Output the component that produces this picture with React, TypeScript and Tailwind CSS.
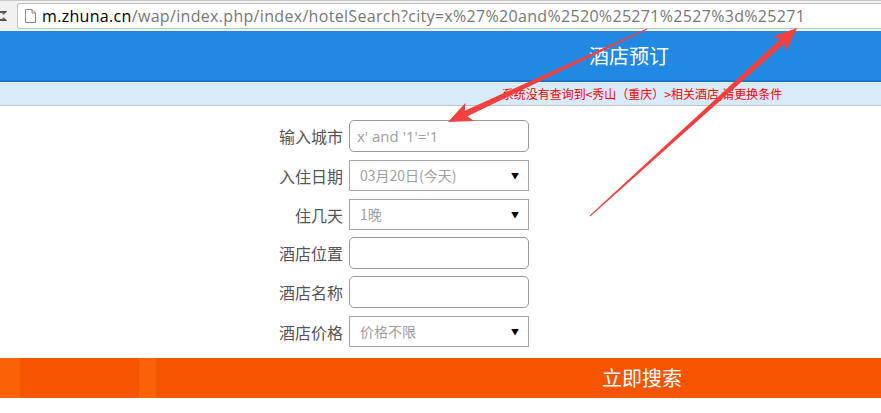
import React from "react"

const rows = [
  { label: "输入城市", kind: "input", value: "x' and '1'='1", mt: "mt-[14px]", h: "h-[32px]" },
  { label: "入住日期", kind: "select", value: "03月20日(今天)", mt: "mt-[8px]", h: "h-[31px]" },
  { label: "住几天", kind: "select", value: "1晚", mt: "mt-[8px]", h: "h-[31px]" },
  { label: "酒店位置", kind: "input", value: "", mt: "mt-[7px]", h: "h-[32px]" },
  { label: "酒店名称", kind: "input", value: "", mt: "mt-[7px]", h: "h-[32px]" },
  { label: "酒店价格", kind: "select", value: "价格不限", mt: "mt-[8px]", h: "h-[31px]" },
]

// tapered annotation arrow, thin at the tail and wide at the head
function arrowPoints(tx: number, ty: number, px: number, py: number) {
  const dx = px - tx
  const dy = py - ty
  const len = Math.hypot(dx, dy)
  const ux = dx / len
  const uy = dy / len
  const nx = -uy
  const ny = ux
  const bx = px - ux * 24
  const by = py - uy * 24
  const cx = px - ux * 20
  const cy = py - uy * 20
  const pts = [
    [tx + nx * 0.5, ty + ny * 0.5],
    [cx + nx * 3, cy + ny * 3],
    [bx + nx * 10, by + ny * 10],
    [px, py],
    [bx - nx * 10, by - ny * 10],
    [cx - nx * 3, cy - ny * 3],
    [tx - nx * 0.5, ty - ny * 0.5],
  ]
  return pts.map((p) => p.map((v) => v.toFixed(1)).join(",")).join(" ")
}

function Caret() {
  return <span className="text-[8px] text-black leading-none mr-[9px]">▼</span>
}

export default function App() {
  return (
    <div
      className="relative w-[881px] h-[413px] overflow-hidden bg-white"
      style={{ fontFamily: '"Noto Sans CJK SC", sans-serif' }}
    >
      {/* browser address bar */}
      <div className="h-[31px] bg-[#f1f1f1] border-t border-[#c9c9c9] flex items-center">
        <div className="w-[7px] h-[14px] flex flex-col justify-center">
          <svg width="7" height="14" viewBox="0 0 7 14">
            <path d="M0 3 L5 3 L3 5 M0 11 L5 11 L3 9" stroke="#555" strokeWidth="2" fill="none" />
          </svg>
        </div>
        <div className="ml-[10px] flex-1 h-[26px] bg-white border border-r-0 border-[#c3c3c3] rounded-l-[3px] flex items-center">
          <svg className="ml-[6px]" width="13" height="16" viewBox="0 0 13 16">
            <path d="M1.5 1.5 H8 L11.5 5 V14.5 H1.5 Z M8 1.5 V5 H11.5" fill="#fff" stroke="#888" strokeWidth="1" />
          </svg>
          <div
            className="ml-[5px] text-[16px] tracking-[0.32px] whitespace-nowrap"
            style={{ fontFamily: '"Open Sans", sans-serif' }}
          >
            <span className="text-black">m.zhuna.cn</span>
            <span className="text-[#777]">/wap/index.php/index/hotelSearch?city=x%27%20and%2520%25271%2527%3d%25271</span>
          </div>
        </div>
      </div>

      {/* header */}
      <div className="h-[51px] bg-[#2289e2] border-b-2 border-[#1b74cc] flex items-center justify-center pl-[377px] text-white text-[20px]">
        酒店预订
      </div>
      <div className="h-[24px] bg-[#d7ebfa] border-b border-[#c4c4c4] flex items-center justify-center pl-[403px] text-[#f00] text-[12px] whitespace-nowrap">
        系统没有查询到&lt;秀山（重庆）&gt;相关酒店,请更换条件
      </div>

      {/* form */}
      <div className="flex flex-col">
        {rows.map((row) => (
          <div key={row.label} className={`flex items-center ${row.mt}`}>
            <div className="w-[343px] text-right text-[16px] text-[#555]">{row.label}</div>
            {row.kind === "input" ? (
              <div
                className={`ml-[6px] w-[180px] ${row.h} border border-[#9a9a9a] rounded-[5px] flex items-center pl-[7px] text-[15px] text-[#a0a0a0]`}
                style={{ fontFamily: '"Open Sans", "Noto Sans CJK SC", sans-serif' }}
              >
                {row.value}
              </div>
            ) : (
              <div
                className={`ml-[6px] w-[180px] ${row.h} border border-[#a6a6a6] flex items-center justify-between pl-[10px] text-[14px] text-[#a0a0a0]`}
              >
                <span>{row.value}</span>
                <Caret />
              </div>
            )}
          </div>
        ))}
      </div>

      {/* search button */}
      <div className="mt-[11px] h-[40px] bg-[linear-gradient(90deg,#fb6206_0,#fb6206_20px,#f55400_20px,#f55400_139px,#fb6106_139px,#fb6106_156px,#f55400_156px)] flex items-center justify-center pl-[403px] text-white text-[20px]">
        立即搜索
      </div>

      {/* red annotation arrows drawn over the screenshot */}
      <svg className="absolute inset-0 pointer-events-none" width="881" height="413">
        <polygon points={arrowPoints(647, 29, 448, 122)} fill="#f2403f" />
        <polygon points={arrowPoints(590, 216, 797, 28)} fill="#f2403f" />
      </svg>
    </div>
  )
}
